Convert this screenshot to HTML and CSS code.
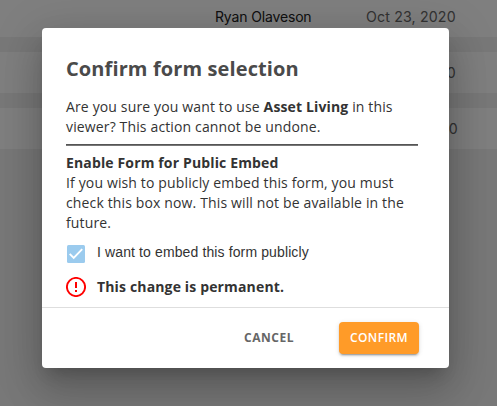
FILE: index.html
```html
<!DOCTYPE html>
<html lang="en">
<head>
<meta charset="utf-8">
<title>Confirm form selection</title>
<link rel="stylesheet" href="styles.css">
</head>
<body>
<main class="list">
  <div class="row"><span class="owner">Ryan Olaveson</span><span class="date">Oct 23, 2020</span></div>
  <div class="row"><span class="owner"></span><span class="date">Oct 23, 2020</span></div>
  <div class="row"><span class="owner"></span><span class="date late">Oct 20, 2020</span></div>
</main>
<div class="overlay">
  <section class="dialog" role="dialog" aria-labelledby="title">
    <div class="content">
      <h2 class="title" id="title">Confirm form selection</h2>
      <p class="text">Are you sure you want to use <b class="name">Asset Living</b> in this<br>viewer? This action cannot be undone.</p>
      <hr class="rule">
      <h3 class="subtitle">Enable Form for Public Embed</h3>
      <p class="text">If you wish to publicly embed this form, you must<br>check this box now. This will not be available in the<br>future.</p>
      <div class="option">
        <svg class="icon" viewBox="0 0 20 20"><rect x="1" y="1" width="18" height="18" rx="1.5" fill="#9bcbee"/><path d="M3.7 9.9 7.7 13.9 16.2 5.2" fill="none" stroke="#fff" stroke-width="1.9"/></svg>
        <span class="option-label">I want to embed this form publicly</span>
      </div>
      <div class="warning">
        <svg class="icon" viewBox="0 0 20 20"><circle cx="10" cy="10" r="9.1" fill="none" stroke="#f00" stroke-width="1.9"/><path d="M9 5h2v6H9zM9 13h2v2H9z" fill="#f00"/></svg>
        <b class="warning-label">This change is permanent.</b>
      </div>
    </div>
    <footer class="actions">
      <button class="button cancel">CANCEL</button>
      <button class="button confirm">CONFIRM</button>
    </footer>
  </section>
</div>
</body>
</html>
```
FILE: styles.css
```css
* { box-sizing: border-box; }
body {
  margin: 0;
  height: 406px;
  overflow: hidden;
  background: #f0f0f0;
  font-family: "Open Sans", sans-serif;
}
.list {
  display: flex;
  flex-direction: column;
  gap: 15px;
}
.row {
  display: flex;
  height: 41px;
  align-items: center;
  padding-left: 215px;
  background: #fff;
  font: 14px Inter, sans-serif;
  color: #222;
}
.row:first-child { height: 37px; padding-bottom: 4px; }
.owner { width: 151px; letter-spacing: -.15px; }
.date { color: #666; font-size: 14.2px; letter-spacing: .15px; }
.late { padding-left: 2px; }
.overlay {
  position: absolute;
  inset: 0;
  padding: 28px 48px 38px 42px;
  background: rgba(0, 0, 0, .5);
}
.dialog {
  display: flex;
  flex-direction: column;
  width: 407px;
  height: 340px;
  border-radius: 4px;
  background: #fff;
  box-shadow: 0 11px 15px -7px rgba(0, 0, 0, .2), 0 24px 38px 3px rgba(0, 0, 0, .14), 0 9px 46px 8px rgba(0, 0, 0, .12);
}
.content {
  height: 280px;
  padding: 25px 24px 0;
  border-bottom: 1px solid #dedede;
  color: #333;
  white-space: nowrap;
}
.title {
  margin: 0 0 12px;
  font-size: 20px;
  line-height: 32px;
  letter-spacing: .11px;
  color: #4a4a4a;
}
.text, .subtitle {
  margin: 0;
  font-size: 14px;
  line-height: 20px;
  letter-spacing: .14px;
}
.rule {
  width: 352px;
  height: 2px;
  margin: 7px 0;
  border: 0;
  background: linear-gradient(#555 50%, #777 50%);
}
.option, .warning {
  display: flex;
  align-items: center;
  gap: 11px;
  height: 20px;
}
.option { margin-top: 11px; }
.warning { margin-top: 13px; }
.icon { width: 20px; height: 20px; }
.option-label {
  font: 14px "Liberation Sans", sans-serif;
  letter-spacing: .12px;
  padding-bottom: 4px;
}
.warning-label { font-size: 14px; line-height: 20px; letter-spacing: .15px; }
.actions {
  display: flex;
  flex: 1;
  justify-content: flex-end;
  gap: 29px;
  padding: 14px 30px;
}
.button {
  height: 32px;
  padding: 0 0 2px;
  border: 0;
  border-radius: 4px;
  background: none;
  font: 600 12px "Open Sans", sans-serif;
  letter-spacing: .5px;
}
.cancel { width: 82px; color: #666; font-weight: 700; }
.confirm {
  width: 80px;
  background: #ff9b28;
  color: #fff;
  letter-spacing: .4px;
  box-shadow: 0 3px 1px -2px rgba(0, 0, 0, .2), 0 2px 2px rgba(0, 0, 0, .14), 0 1px 5px rgba(0, 0, 0, .12);
}
```
